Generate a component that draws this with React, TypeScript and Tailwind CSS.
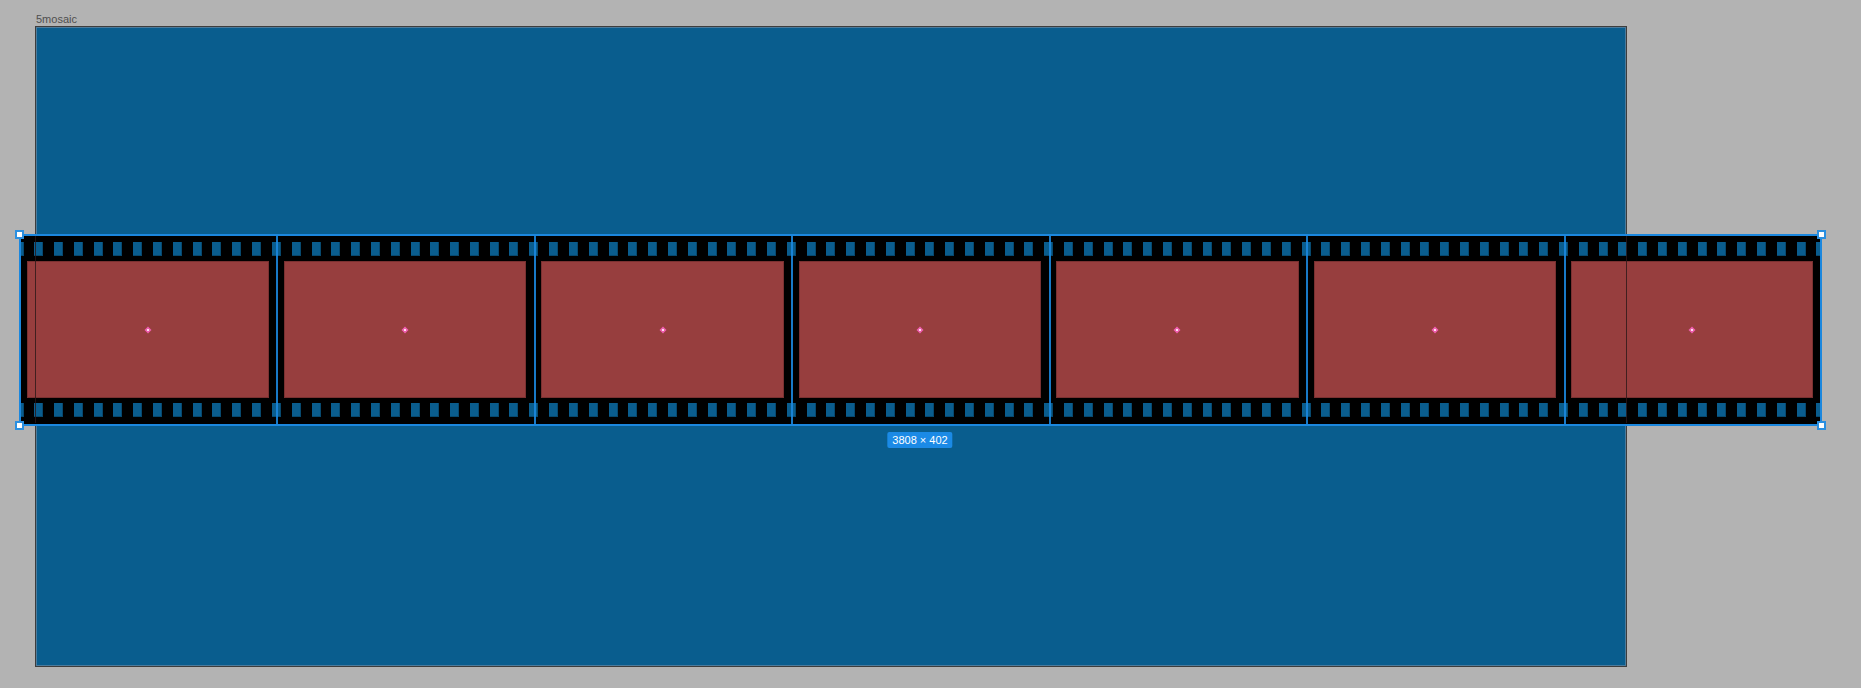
const FRAMES = [0, 1, 2, 3, 4, 5, 6];
const HOLES = Array.from({ length: 14 }, (_, i) => i);

function Sprockets() {
  return (
    <div className="-mx-[4.5px] flex h-[14px] justify-between">
      {HOLES.map((i) => (
        <span key={i} className="h-full w-[9px] bg-[#0a5d8e] shadow-[inset_-1px_-1px_0_#07496f]" />
      ))}
    </div>
  );
}

function CenterMark() {
  return (
    <svg width="9" height="9" viewBox="0 0 9 9" className="absolute left-1/2 top-1/2 -translate-x-1/2 -translate-y-1/2">
      <path d="M4.5 1 L8 4.5 L4.5 8 L1 4.5 Z" fill="#ee5fae" />
      <rect x="3.5" y="3.5" width="2" height="2" fill="#ffe0f0" />
    </svg>
  );
}

function Frame({ index }: { index: number }) {
  return (
    <div className="relative flex flex-1 flex-col overflow-hidden pt-[8px]">
      <Sprockets />
      <div className="relative mx-[7.5px] mt-[5px] h-[137px] border border-[#7a3131] bg-[#973e3e]">
        <CenterMark />
      </div>
      <div className="mt-[5px]">
        <Sprockets />
      </div>
      {index > 0 && <div className="absolute inset-y-0 left-0 w-[2px] bg-[#1b87de]/90" />}
    </div>
  );
}

function Handle({ className }: { className: string }) {
  return <div className={"absolute h-[9px] w-[9px] border-2 border-[#2a8fe0] bg-white " + className} />;
}

export default function App() {
  return (
    <div className="relative h-[688px] w-[1861px] overflow-hidden bg-[#b3b3b3] font-['Liberation_Sans',Arial,sans-serif]">
      <div className="absolute left-[36px] top-[14px] text-[11px] leading-none text-[#4f4f4f]">5mosaic</div>

      {/* artboard */}
      <div className="absolute left-[35px] top-[26px] h-[641px] w-[1592px] border border-[#3d3d3d] bg-[#095d8e] shadow-[inset_0_0_0_1px_#4c7b9c]" />

      {/* film strip */}
      <div className="absolute left-[19px] top-[234px] h-[191px] w-[1802px]">
        <div className="flex h-full w-full bg-black">
          {FRAMES.map((i) => (
            <Frame key={i} index={i} />
          ))}
        </div>
        <div className="pointer-events-none absolute -inset-[0.5px] border-2 border-[#1b87de]" />
        <Handle className="-left-[4.5px] -top-[4.5px]" />
        <Handle className="-right-[4.5px] -top-[4.5px]" />
        <Handle className="-bottom-[4.5px] -left-[4.5px]" />
        <Handle className="-bottom-[4.5px] -right-[4.5px]" />
        <div className="absolute left-1/2 top-[198px] -translate-x-1/2 rounded-[2px] bg-[#1b8ae6] px-[5px] py-[2px] text-[11px] leading-[12px] text-white">
          3808 × 402
        </div>
      </div>

      {/* artboard edges drawn over the strip */}
      <div className="absolute left-[35px] top-[236px] h-[187px] w-px bg-[#2a1818]/80" />
      <div className="absolute left-[1626px] top-[236px] h-[187px] w-px bg-[#2a1818]/80" />
    </div>
  );
}
